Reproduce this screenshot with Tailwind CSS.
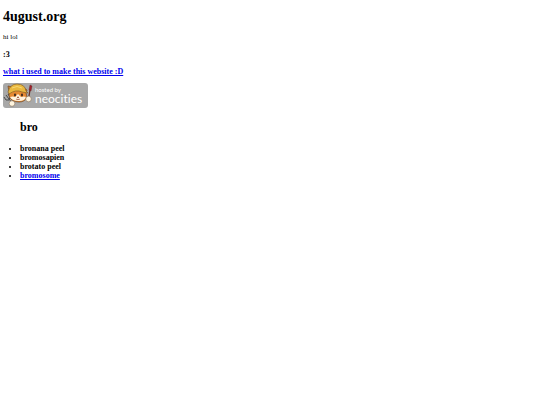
<!DOCTYPE html>
<html lang="en">
<head>
  <meta charset="UTF-8">
  <meta name="viewport" content="width=device-width, initial-scale=1.0" />
  <title>4ugust.org</title>
  <script src="https://cdn.jsdelivr.net/npm/@tailwindcss/browser@4"></script>
</head>
<body class="bg-white text-black font-['Liberation_Serif',serif] px-[3px] pt-[9px]">

  <h1 class="text-[14px] leading-4 font-bold">4ugust.org</h1>
  <p class="mt-2 text-[7px] leading-[9px]">hi lol</p>
  <h3 class="mt-2 text-[8px] leading-[9px] font-bold">:3</h3>
  <h3 class="mt-2 text-[8px] leading-[9px] font-bold">
    <a href="#" class="text-[#0000ee] underline">what i used to make this website :D</a>
  </h3>

  <!-- neocities badge -->
  <a href="#" class="mt-[7px] block w-[85px]" aria-label="hosted by neocities">
    <svg viewBox="0 0 85 25" class="block w-full [font-variant-ligatures:none]" font-family="Lato, sans-serif" fill="#fff">
      <rect width="85" height="25" rx="3" fill="#a8a8a8" />
      <text x="32" y="9" font-size="6">hosted by</text>
      <text x="32" y="20" font-size="12">neocities</text>
      <!-- fork -->
      <path d="M3 12l6 8M1 14l2 3 3 0M5 11l2 3-1 3" fill="none" stroke="#4a4a4a" stroke-width="1" />
      <!-- cat -->
      <path d="M6 9L5 3l4 1q6-5 12 1l3 2-1 3 1 4q-2 5-8 5-8 0-10-6z" fill="#e58a32" stroke="#6d4522" stroke-width=".7" />
      <path d="M7 14q3-1 5 0l3-3 3 3q3-1 5 0-1 4-7 4-7 0-9-4z" fill="#fff3dd" />
      <path d="M5 9Q7 1 14 1q8 0 9 7l2 2-6-1q-6-3-13 2z" fill="#e9b840" stroke="#765422" stroke-width=".6" />
      <path d="M9 5q5-3 10 0" fill="none" stroke="#f7d872" stroke-width="1" />
      <ellipse cx="12" cy="12" rx="1" ry="1.4" fill="#3d291f" />
      <ellipse cx="19" cy="12" rx="1" ry="1.4" fill="#3d291f" />
      <path d="M14 14h2l-1 1zM13 16q2 1 4 0" fill="#a33c29" stroke="#804028" stroke-width=".4" />
      <!-- brush -->
      <path d="M26 13l1-6" stroke="#683526" stroke-width="1.3" />
      <path d="M26 7l1-5 2 1-1 5z" fill="#a5202c" stroke="#5d2222" stroke-width=".4" />
      <!-- paws -->
      <circle cx="9" cy="20.5" r="2.8" fill="#fff5df" stroke="#79614a" stroke-width=".5" />
      <circle cx="25.5" cy="16" r="2.8" fill="#fff5df" stroke="#79614a" stroke-width=".5" />
    </svg>
  </a>

  <ul class="ml-[17px] mt-3 list-disc text-[8px] leading-[9px] font-bold">
    <li class="list-none text-[12px] leading-[14px] mb-[10px]"><h2>bro</h2></li>
    <li>bronana peel</li>
    <li>bromosapien</li>
    <li>brotato peel</li>
    <li><a href="#" class="text-[#0000ee] underline">bromosome</a></li>
  </ul>

</body>
</html>
